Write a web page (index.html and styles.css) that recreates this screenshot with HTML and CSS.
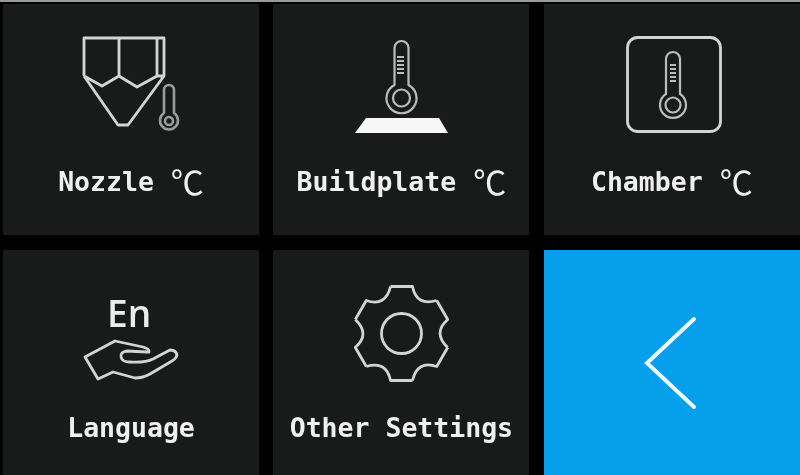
FILE: index.html
```html
<!DOCTYPE html>
<html lang="en">
<head>
    <meta charset="UTF-8">
    <title>Settings Menu</title>
    <link rel="stylesheet" href="styles.css">
</head>
<body>
    <div class="menu">
        <!-- Top row -->
        <div class="tile">
            <svg class="icon" viewBox="71 34 120 104">
                <path class="line" d="M84 76V38H164V76H157L137 87L119 76L102 86L84 76M119 38V76M157 38V76M84 76L118 125H128L164 76"/>
                <path class="line bulb" d="M164 113V90a5 5 0 0 1 10 0V113a9 9 0 1 1-10 0Z"/>
                <circle class="line bulb" cx="169" cy="121" r="4"/>
            </svg>
            <div class="label">Nozzle<span class="unit">℃</span></div>
        </div>
        <div class="tile">
            <svg class="icon" viewBox="341 34 120 104">
                <path class="line thin" d="M394.500 85V48a7 7 0 0 1 14 0V85a15 15 0 1 1-14 0Z"/>
                <circle class="line thin" cx="401.500" cy="98" r="8.500"/>
                <path class="line thin" d="M397 57H404M397 61H404M397 65H404M397 69H404M397 73H404"/>
                <path class="plate" d="M366 118H439L448 133H355Z"/>
            </svg>
            <div class="label">Buildplate<span class="unit">℃</span></div>
        </div>
        <div class="tile">
            <svg class="icon" viewBox="612 34 120 104">
                <rect class="line" x="627.500" y="37.500" width="93" height="94" rx="10"/>
                <path class="line thin" d="M666 94V59a7 7 0 0 1 14 0V94a13 13 0 1 1-14 0Z"/>
                <circle class="line thin" cx="673" cy="105" r="7.500"/>
                <path class="line thin" d="M670 65H676M670 69H676M670 73H676M670 77H676M670 81H676"/>
            </svg>
            <div class="label">Chamber<span class="unit">℃</span></div>
        </div>

        <!-- Bottom row -->
        <div class="tile">
            <svg class="icon" viewBox="71 280 120 104">
                <text class="lang" x="107" y="327">En</text>
                <path class="line" d="M85 357L115 341L143 347Q150 349 149 352Q147 352 127 351Q120 352 121 357Q122 362 130 362Q145 363 153 359L170 350Q176 350 177 355Q176 359 172 361L150 374Q143 378 135 378L113 372L98 379Z"/>
            </svg>
            <div class="label">Language</div>
        </div>
        <div class="tile">
            <svg class="icon" viewBox="341 280 120 104">
                <g transform="translate(401.500 333.500)">
                    <path id="tooth" class="line" d="M-11 -47H11Q15 -27 35.200 -33"/>
                    <use href="#tooth" transform="rotate(60)"/>
                    <use href="#tooth" transform="rotate(120)"/>
                    <use href="#tooth" transform="rotate(180)"/>
                    <use href="#tooth" transform="rotate(240)"/>
                    <use href="#tooth" transform="rotate(300)"/>
                    <circle class="line" r="20"/>
                </g>
            </svg>
            <div class="label">Other Settings</div>
        </div>
        <div class="tile back">
            <svg class="arrow" viewBox="0 0 60 100">
                <path d="M52 6L5 50L52 94"/>
            </svg>
        </div>
    </div>
</body>
</html>
```

FILE: styles.css
```css
html, body { margin: 0; height: 100%; overflow: hidden; }
body { background: #000; border-top: 2px solid #9a9a9a; box-sizing: border-box; }

.menu { display: grid; grid-template-columns: 256px 256px 256px; grid-template-rows: 231px 225px; column-gap: 14.400px; row-gap: 15px; padding: 2px 0 0 3px; filter: blur(0.6px); }

.tile { background: #191b1a; display: flex; flex-direction: column; align-items: center; padding-top: 30px; box-sizing: border-box; }
.icon { width: 120px; height: 104px; display: block; }
.line { fill: none; stroke: #d4d4d4; stroke-width: 2.800; stroke-linejoin: round; }
.thin { stroke: #bcbcbc; stroke-width: 2.200; }
.bulb { stroke: #9c9c9c; stroke-width: 2.600; }
.plate { fill: #f6f6f6; }
.lang { font-family: "Open Sans", sans-serif; font-size: 37px; font-weight: 600; fill: #ececec; }

.label { display: flex; align-items: center; height: 36px; margin-top: 25px; font-family: "DejaVu Sans Mono", monospace; font-size: 26.500px; font-weight: bold; color: #f0f0f0; white-space: pre; }
.unit { margin-left: 17px; font-family: "Noto Sans CJK SC", sans-serif; font-size: 33px; font-weight: 400; }

.back { background: #059fec; justify-content: center; padding-top: 0; }
.arrow { width: 60px; height: 100px; display: block; }
.arrow path { fill: none; stroke: #eef9fe; stroke-width: 4; stroke-linecap: round; }
```
